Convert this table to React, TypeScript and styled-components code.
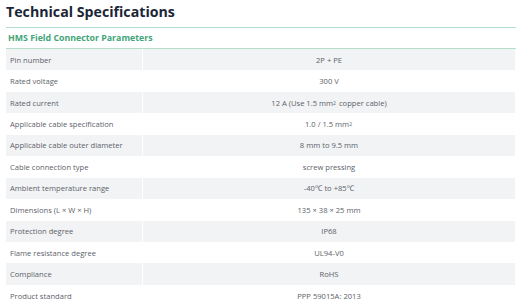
import React, { FC, ReactElement } from 'react'
import styled, { createGlobalStyle } from 'styled-components'

const GlobalStyle = createGlobalStyle`
  html, body {
    margin: 0;
    padding: 0;
    background: #fff;
    font-family: 'Open Sans', 'Noto Sans', sans-serif;
  }
`

const Wrapper = styled.section`
  width: 510px;
  padding: 0 0 0 6px;
`

const Title = styled.h2`
  margin: 0;
  height: 27px;
  font-size: 14.2px;
  line-height: 24px;
  font-weight: 700;
  color: #1b2636;
`

const GroupHeader = styled.div`
  height: 20px;
  display: flex;
  align-items: center;
  padding-left: 2px;
  border-top: 1px solid #b5dfcb;
  border-bottom: 1px solid #b5dfcb;
  color: #42a577;
  font-size: 8.8px;
  font-weight: 700;
`

const Table = styled.div`
  width: 509px;
  display: flex;
  flex-direction: column;
`

const Row = styled.div<{ $shaded: boolean }>`
  height: 21.45px;
  display: grid;
  grid-template-columns: 137px 1fr;
  background: ${(p) => (p.$shaded ? '#f2f3f5' : '#fff')};
  color: #5d6269;
  font-size: 7.6px;
`

const Label = styled.div`
  display: flex;
  align-items: center;
  padding-left: 4px;
  border-right: 1px solid #fff;
`

const Value = styled.div`
  display: flex;
  align-items: center;
  justify-content: center;
  white-space: pre;
`

const Sup = styled.sup`
  font-size: 5px;
  margin-right: 1px;
`

const specs: [string, React.ReactNode][] = [
  ['Pin number', '2P + PE'],
  ['Rated voltage', '300 V'],
  ['Rated current', <>12 A (Use 1.5 mm<Sup>2</Sup> copper cable)</>],
  ['Applicable cable specification', <>1.0 / 1.5 mm<Sup>2</Sup></>],
  ['Applicable cable outer diameter', '8 mm to 9.5 mm'],
  ['Cable connection type', 'screw pressing'],
  ['Ambient temperature range', '-40℃ to +85℃'],
  ['Dimensions (L × W × H)', '135 × 38 × 25 mm'],
  ['Protection degree', 'IP68'],
  ['Flame resistance degree', 'UL94-V0'],
  ['Compliance', 'RoHS'],
  ['Product standard', 'PPP 59015A: 2013'],
]

const App: FC = (): ReactElement => {
  return (
    <>
      <GlobalStyle />
      <Wrapper>
        <Title>Technical Specifications</Title>
        <GroupHeader>HMS Field Connector Parameters</GroupHeader>
        <Table>
          {specs.map(([label, value], i) => (
            <Row key={label} $shaded={i % 2 === 0}>
              <Label>{label}</Label>
              <Value>{value}</Value>
            </Row>
          ))}
        </Table>
      </Wrapper>
    </>
  )
}

export default App
